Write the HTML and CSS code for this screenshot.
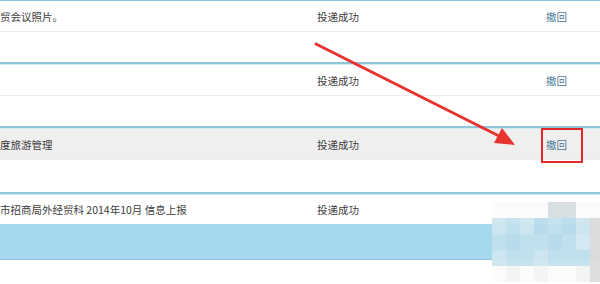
FILE: index.html
```html
<!DOCTYPE html>
<html lang="zh-CN">
<head>
  <meta charset="UTF-8">
  <title>信息投递</title>
  <link rel="stylesheet" href="styles.css">
</head>
<body>
  <div class="list">
    <div class="sep first"></div>
    <div class="row">
      <div class="col-title">贸会议照片。</div>
      <div class="col-status">投递成功</div>
      <div class="col-op"><a href="#">撤回</a></div>
    </div>
    <div class="gap"></div>

    <div class="sep"></div>
    <div class="row">
      <div class="col-title"></div>
      <div class="col-status">投递成功</div>
      <div class="col-op"><a href="#">撤回</a></div>
    </div>
    <div class="gap"></div>

    <div class="sep"></div>
    <div class="row row-hover">
      <div class="col-title">度旅游管理</div>
      <div class="col-status">投递成功</div>
      <div class="col-op"><a href="#">撤回</a></div>
    </div>
    <div class="gap tall"></div>

    <div class="sep"></div>
    <div class="row plain">
      <div class="col-title">市招商局外经贸科 2014年10月 信息上报</div>
      <div class="col-status">投递成功</div>
      <div class="col-op"></div>
    </div>
    <div class="band"></div>
  </div>

  <!-- annotation overlay -->
  <svg class="arrow" width="600" height="284" viewBox="0 0 600 284">
    <line x1="316" y1="44" x2="501" y2="137" stroke="#e8332f" stroke-width="3" stroke-linecap="round"/>
    <polygon points="515,145 494,143 502,128" fill="#e8332f"/>
  </svg>
  <div class="mark"></div>

  <div class="mosaic">
    <i class="w"></i><i class="w"></i><i class="w"></i><i class="w"></i><i class="g"></i><i class="g"></i><i class="w"></i><i class="w"></i>
    <i class="b1"></i><i class="b2"></i><i class="b1"></i><i class="b3"></i><i class="b2"></i><i class="b3"></i><i class="b1"></i><i class="gr"></i>
    <i class="b2"></i><i class="b3"></i><i class="b2"></i><i class="b2"></i><i class="b3"></i><i class="b2"></i><i class="b4"></i><i class="gr"></i>
    <i class="b1"></i><i class="b2"></i><i class="b2"></i><i class="b1"></i><i class="b2"></i><i class="b2"></i><i class="b2"></i><i class="gr"></i>
    <i class="w"></i><i class="w2"></i><i class="w"></i><i class="w2"></i><i class="w"></i><i class="w"></i><i class="w2"></i><i class="gr"></i>
  </div>
</body>
</html>
```

FILE: styles.css
```css
body {
  margin: 0;
  font-family: "Noto Sans CJK SC", "Liberation Sans", sans-serif;
  font-size: 10.5px;
  color: #3c3c3c;
  background: #fff;
  width: 600px;
  height: 284px;
  overflow: hidden;
  position: relative;
}

.list {
  display: flex;
  flex-direction: column;
}

.sep {
  height: 2px;
  background: #8fc4da;
  border-bottom: 1px solid #d3e9f2;
}

.sep.first {
  height: 1px;
  border-bottom: none;
}

.row {
  display: flex;
  align-items: center;
  height: 30px;
  border-bottom: 1px solid #ececec;
}

.row.plain {
  border-bottom: none;
  height: 29px;
}

.row-hover {
  background: #efefef;
}

.gap {
  height: 30px;
}

.gap.tall {
  height: 32px;
}

.col-title {
  width: 317px;
  white-space: nowrap;
}

.col-status {
  width: 229px;
}

.col-op a {
  color: #4a7a9a;
  text-decoration: none;
}

.band {
  height: 35px;
  background: #a6d8ee;
  border-bottom: 1px solid #93c9e0;
}

.arrow {
  position: absolute;
  left: 0;
  top: 0;
}

.mark {
  position: absolute;
  left: 541px;
  top: 128px;
  width: 38px;
  height: 31px;
  border: 2px solid #e0282b;
}

.mosaic {
  position: absolute;
  left: 492px;
  top: 202px;
  display: grid;
  grid-template-columns: repeat(7, 14px) 10px;
  grid-auto-rows: 16px;
  opacity: 0.95;
}

.mosaic i { display: block; }
.mosaic .w { background: #fbfbfb; }
.mosaic .w2 { background: #f3f4f4; }
.mosaic .g { background: #d5dee1; }
.mosaic .gr { background: #dcdcdc; }
.mosaic .b1 { background: #cfe6f0; }
.mosaic .b2 { background: #c3e1ee; }
.mosaic .b3 { background: #b9dcec; }
.mosaic .b4 { background: #d6e9f1; }
```
